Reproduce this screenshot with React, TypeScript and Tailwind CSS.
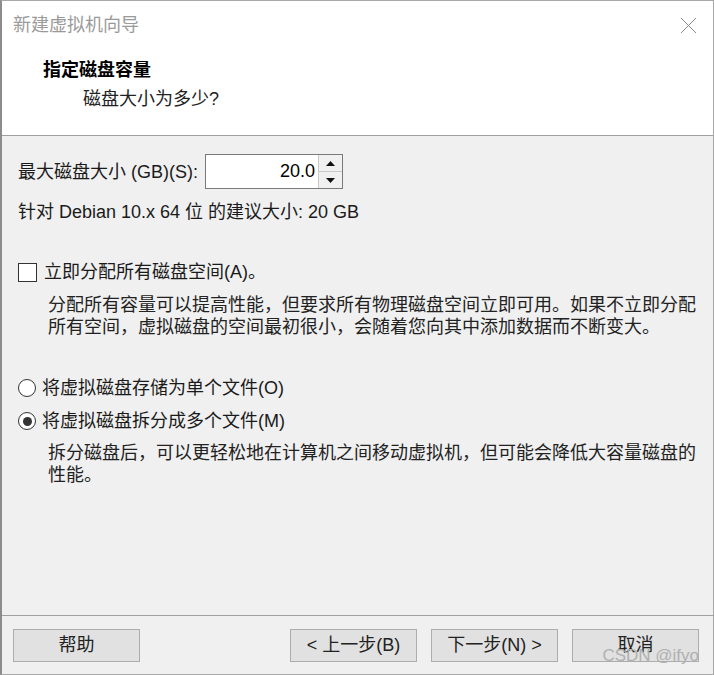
import React, { useState } from "react";

const font = { fontFamily: '"Liberation Sans", "Noto Sans CJK SC", sans-serif' };

function Checkbox({ checked }: { checked: boolean }) {
  return (
    <div className="w-[19px] h-[19px] border border-[#333333] bg-white flex items-center justify-center shrink-0">
      {checked && <div className="w-[9px] h-[9px] bg-[#333333]" />}
    </div>
  );
}

function Radio({ checked }: { checked: boolean }) {
  return (
    <div className="w-[18px] h-[18px] rounded-full border border-[#333333] bg-white flex items-center justify-center shrink-0">
      {checked && <div className="w-[9px] h-[9px] rounded-full bg-[#333333]" />}
    </div>
  );
}

function Btn({ children }: { children: React.ReactNode }) {
  return (
    <button className="w-[127px] h-[33px] bg-[#e1e1e1] border border-[#adadad] text-[18px] text-[#222222] flex items-center justify-center">
      {children}
    </button>
  );
}

export default function App() {
  const [size, setSize] = useState("20.0");
  const [split, setSplit] = useState(true);
  const [allocate, setAllocate] = useState(false);

  const step = (d: number) => {
    const v = Math.max(0, parseFloat(size) + d);
    setSize(v.toFixed(1));
  };

  return (
    <div style={font} className="relative w-[714px] h-[675px] flex flex-col border border-[#a8a8a8] border-l-2 border-l-[#8c8c8c] bg-[#f0f0f0] text-[#1a1a1a] text-[18px]">
      {/* header */}
      <div className="h-[135px] shrink-0 bg-white border-b border-[#a0a0a0] flex flex-col">
        <div className="h-[48px] flex items-center justify-between pl-[11px] pr-[16px]">
          <span className="text-[#9a9a9a] leading-[24px]">新建虚拟机向导</span>
          <svg width="17" height="17" viewBox="0 0 17 17">
            <path d="M1 1L16 16M16 1L1 16" stroke="#8a8a8a" strokeWidth="1" fill="none" />
          </svg>
        </div>
        <div className="pl-[41px] mt-[9px] leading-[24px] font-bold text-black">指定磁盘容量</div>
        <div className="pl-[81px] mt-[5px] leading-[24px] text-[#222222]">磁盘大小为多少?</div>
      </div>

      {/* body */}
      <div className="flex-1 flex flex-col pl-[16px] pt-[18px]">
        <div className="flex items-center h-[35px]">
          <span className="leading-[24px] mr-[7px]">最大磁盘大小 (GB)(S):</span>
          <div className="flex h-[35px] border border-[#7a7a7a] bg-white">
            <input
              value={size}
              onChange={(e) => setSize(e.target.value)}
              className="w-[112px] h-full text-right pr-[3px] outline-none bg-white text-[18px] text-black"
              style={font}
            />
            <div className="w-[24px] flex flex-col border-l border-[#c8c8c8]">
              <button onClick={() => step(1)} className="flex-1 bg-[#f0f0f0] border-b border-[#c8c8c8] flex items-center justify-center">
                <svg width="9" height="5" viewBox="0 0 9 5"><path d="M0 5L4.5 0L9 5Z" fill="#111" /></svg>
              </button>
              <button onClick={() => step(-1)} className="flex-1 bg-[#f0f0f0] flex items-center justify-center">
                <svg width="9" height="5" viewBox="0 0 9 5"><path d="M0 0L4.5 5L9 0Z" fill="#111" /></svg>
              </button>
            </div>
          </div>
        </div>
        <div className="mt-[11px] leading-[24px] whitespace-nowrap">针对 Debian 10.x 64 位 的建议大小: 20 GB</div>

        <label className="mt-[36px] h-[24px] flex items-center gap-[7px] cursor-pointer" onClick={() => setAllocate(!allocate)}>
          <Checkbox checked={allocate} />
          <span className="leading-[24px]">立即分配所有磁盘空间(A)。</span>
        </label>
        <div className="mt-[10px] pl-[30px] leading-[22px] whitespace-nowrap text-[#222222]">
          分配所有容量可以提高性能，但要求所有物理磁盘空间立即可用。如果不立即分配
          <br />
          所有空间，虚拟磁盘的空间最初很小，会随着您向其中添加数据而不断变大。
        </div>

        <div className="mt-[38px] h-[24px] flex items-center gap-[6px] cursor-pointer" onClick={() => setSplit(false)}>
          <Radio checked={!split} />
          <span className="leading-[24px]">将虚拟磁盘存储为单个文件(O)</span>
        </div>
        <div className="mt-[9px] h-[24px] flex items-center gap-[6px] cursor-pointer" onClick={() => setSplit(true)}>
          <Radio checked={split} />
          <span className="leading-[24px]">将虚拟磁盘拆分成多个文件(M)</span>
        </div>
        <div className="mt-[9px] pl-[30px] leading-[22px] whitespace-nowrap text-[#222222]">
          拆分磁盘后，可以更轻松地在计算机之间移动虚拟机，但可能会降低大容量磁盘的
          <br />
          性能。
        </div>
      </div>

      {/* footer */}
      <div className="h-[59px] shrink-0 border-t border-[#a0a0a0] flex items-start justify-between pt-[13px] pl-[11px] pr-[14px]">
        <Btn>帮助</Btn>
        <div className="flex gap-[14px]">
          <Btn>&lt; 上一步(B)</Btn>
          <Btn>下一步(N) &gt;</Btn>
          <Btn>取消</Btn>
        </div>
      </div>

      <div className="absolute right-[14px] bottom-[8px] text-[17px] text-[#b0b0b0] leading-[20px] pointer-events-none">
        CSDN @ifyo
      </div>
    </div>
  );
}
